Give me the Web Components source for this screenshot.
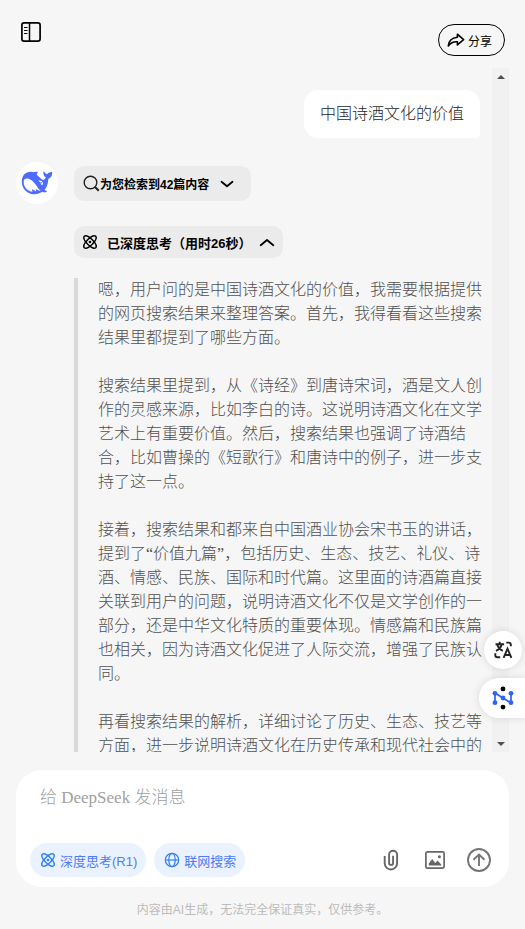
<!DOCTYPE html>
<html lang="zh-CN">
<head>
<meta charset="utf-8">
<meta name="viewport" content="width=device-width, initial-scale=1">
<title>DeepSeek</title>
<style>
  html, body {
    height: 100%;
    margin: 0;
  }

  body {
    background: #f6f6f6;
    color: #000;
    overflow: hidden;
    font-family: "Liberation Sans", "Noto Sans CJK SC", sans-serif;
    text-spacing-trim: space-all;
  }
</style>
</head>
<body>
<chat-app></chat-app>

<script>
const icons = {
  sidebar: `<svg width="22" height="22" viewBox="0 0 22 22" fill="none" stroke="#000">
    <rect x="1.9" y="1.9" width="18.200" height="18.200" rx="2.200" stroke-width="1.700"/>
    <path d="M9.500 1.500v19" stroke-width="1.500"/>
    <path d="M4 6.500h3.500M4 9.500h3.500M4 12.500h3.500" stroke-width="1.200"/>
  </svg>`,
  share: `<svg width="18" height="16" viewBox="0 0 18 16" fill="none" stroke="#000" stroke-width="1.6" stroke-linejoin="round">
    <path d="M10.400 2.200 16.600 7.600l-6.200 5.300V9.800C6.400 9.500 3.600 10.800 1.300 13.900 1.800 8.800 5.300 5.800 10.400 5.300z"/>
  </svg>`,
  search: `<svg width="17" height="17" viewBox="0 0 17 17" fill="none" stroke="#222" stroke-width="1.4">
    <circle cx="7.500" cy="7.500" r="6.300"/>
    <path d="m12 12 3.800 3.800" stroke-width="2"/>
  </svg>`,
  down: `<svg width="14" height="8" viewBox="0 0 14 8" fill="none" stroke="#000" stroke-width="1.800" stroke-linecap="round" stroke-linejoin="round"><path d="m1.500 1.800 5.500 4.400 5.500-4.400"/></svg>`,
  up: `<svg width="16" height="9" viewBox="0 0 16 9" fill="none" stroke="#000" stroke-width="1.800" stroke-linecap="round" stroke-linejoin="round"><path d="m1.700 7.200 6.300-5.200 6.300 5.200"/></svg>`,
  atom: `<svg width="16" height="16" viewBox="0 0 16 16" fill="none" stroke="currentColor" stroke-width="1.500">
    <path d="M2.300 2.300C4.300.5 8 3.500 10.300 5.700 12.500 8 15.500 11.700 13.700 13.700 11.700 15.500 8 12.500 5.700 10.300 3.500 8 .5 4.300 2.300 2.300z"/>
    <path d="M13.700 2.300C11.700.5 8 3.500 5.700 5.700 3.500 8 .5 11.700 2.300 13.700 4.300 15.500 8 12.500 10.300 10.300 12.500 8 15.500 4.300 13.700 2.300z"/>
    <circle cx="8" cy="8" r="1.300" fill="currentColor" stroke="none"/>
  </svg>`,
  globe: `<svg width="16" height="16" viewBox="0 0 16 16" fill="none" stroke="currentColor" stroke-width="1.200">
    <circle cx="8" cy="8" r="6.700"/>
    <ellipse cx="8" cy="8" rx="3.200" ry="6.700"/>
    <path d="M1.300 8h13.400"/>
  </svg>`,
  clip: `<svg width="16" height="22" viewBox="0 0 16 22" fill="none" stroke="#666" stroke-width="1.900">
    <path d="M1.700 7v7.300a6.200 6.200 0 0 0 12.400 0V5.700a4 4 0 0 0-8 0v8.200a2 2 0 0 0 4 0V6.700"/>
  </svg>`,
  image: `<svg width="20" height="18" viewBox="0 0 20 18">
    <rect x=".9" y=".9" width="18.200" height="16.200" rx="1.500" fill="none" stroke="#666" stroke-width="1.700"/>
    <path d="M3.800 14.500v-2l3.400-4.600 3 4 2.400-2.400 3.600 4v1z" fill="#666"/>
    <circle cx="14.400" cy="5.800" r="1.500" fill="#666"/>
  </svg>`,
  send: `<svg width="24" height="24" viewBox="0 0 24 24" fill="none" stroke="#757575" stroke-width="1.900">
    <circle cx="12" cy="12" r="11"/>
    <path d="M12 18V6.800M6.500 11.800 12 6.500l5.500 5.300"/>
  </svg>`,
  whale: `<svg width="32" height="26" viewBox="0 0 32 26">
    <path fill="#4d6bfe" d="M31.200 1.500c-1.300.9-2.500.5-3.500 1.300-.7.500-1.200 1.200-1.800 1.400-1.200-.3-1.800-1.500-2.700-2.500-.4-.5-.9-.3-.9.400 0 2.500.7 4.200 2.600 5.500-.7 1.200-1.500 2.100-2.600 2.500-1.700-.4-2.700-1.800-4-3-1.100-1.100-2.900-2.200-2.500-3.400.2-.6 1-.9 1.300-1.300-.9-1-3.200-.7-5.200-.1C10.600 1.300 9.500 2 8.300 2 3.500 2.400.8 6.500.8 11.600c0 7.100 5.400 12.700 12.300 12.700 3.300 0 5.900-1 8-2.500 1.500.6 3.800.8 4.500.1.600-.6.200-1.200-2.200-2 2-2.200 3.300-4.900 3.600-8.200.1-1.500.3-2.600.9-3.100 2.400-.9 3.700-3.500 3.300-7.100z"/>
    <path fill="#fff" d="M2.700 12.500c-.2-3 1-4.200 3.500-4 4.300.5 7.300 4.300 9.700 7.800 1.200 1.800 2.200 3.500 3.700 4.300-2 .2-3.700-.5-5-1.500l.5 2.500-3.700-2.300c-.8.4-.2 1.500.3 2.500-5-.5-8.700-4.500-9-9.300z"/>
    <path fill="#fff" d="M17.300 10.600c2-.5 3.800.2 4.500 2.100.5 1.300.1 2.200-.9 2.200-1.300 0-1.100-1.100-1.700-2.300-.4-.8-1.300-1-1.900-2z"/>
    <circle cx="20.100" cy="12.700" r=".8" fill="#4d6bfe"/>
  </svg>`,
  translate: `<svg width="19" height="18" viewBox="0 0 19 18" fill="none" stroke="#222" stroke-width="1.900">
    <path d="M1.500 3.300h8.600M5.700.8v2.500M2 9.800c3.300-1.500 5-3.600 5.700-6.300M3.300 4c1 2.800 2.700 4.500 5.500 5.800"/>
    <path d="m9.600 16.800 3.900-9.200 3.900 9.200M10.900 14h5.200"/>
    <path d="M12.300 1.600h2.500a2 2 0 0 1 2 2v1.700M1.300 12.300v1.900a2 2 0 0 0 2 2h2.900"/>
  </svg>`,
  network: `<svg width="24" height="24" viewBox="0 0 24 24">
    <path d="M4 17V7l16 10V7" fill="none" stroke="#2f62f5" stroke-width="1.700" stroke-linejoin="round"/>
    <g fill="#2f62f5">
      <circle cx="4" cy="7.300" r="2.400"/><circle cx="4" cy="16.700" r="2.400"/>
      <circle cx="20" cy="7.300" r="2.400"/><circle cx="20" cy="16.700" r="2.400"/>
      <circle cx="12" cy="12" r="2.400"/>
    </g>
    <g fill="#000"><circle cx="12" cy="2.900" r="2.400"/><circle cx="12" cy="21.100" r="2.400"/></g>
  </svg>`,
};

const thoughts = [
  '嗯，用户问的是中国诗酒文化的价值，我需要根据提供的网页搜索结果来整理答案。首先，我得看看这些搜索结果里都提到了哪些方面。',
  '搜索结果里提到，从《诗经》到唐诗宋词，酒是文人创作的灵感来源，比如李白的诗。这说明诗酒文化在文学艺术上有重要价值。然后，搜索结果也强调了诗酒结合，比如曹操的《短歌行》和唐诗中的例子，进一步支持了这一点。',
  '接着，搜索结果和都来自中国酒业协会宋书玉的讲话，提到了“价值九篇”，包括历史、生态、技艺、礼仪、诗酒、情感、民族、国际和时代篇。这里面的诗酒篇直接关联到用户的问题，说明诗酒文化不仅是文学创作的一部分，还是中华文化特质的重要体现。情感篇和民族篇也相关，因为诗酒文化促进了人际交流，增强了民族认同。',
  '再看搜索结果的解析，详细讨论了历史、生态、技艺等方面，进一步说明诗酒文化在历史传承和现代社会中的',
];

const baseStyle = `
  * {
    box-sizing: border-box;
  }

  button {
    appearance: none;
    margin: 0;
    padding: 0;
    border: 0;
    background: none;
    color: inherit;
    font: inherit;
    cursor: pointer;
  }

  svg {
    display: block;
    flex: none;
    overflow: visible;
  }
`;

class BaseElement extends HTMLElement {
  constructor() {
    super();
    this.attachShadow({ mode: 'open' });
    this.shadowRoot.innerHTML = `<style>${baseStyle}${this.styles()}</style>${this.markup()}`;
  }

  styles() {
    return '';
  }

  markup() {
    return '<slot></slot>';
  }
}

class ChatHeader extends BaseElement {
  styles() {
    return `
      :host {
        display: flex;
        flex: none;
        justify-content: space-between;
        align-items: flex-start;
        height: 68px;
        padding: 21px 20px 0;
      }

      .share {
        display: flex;
        align-items: center;
        gap: 3px;
        height: 32px;
        margin-top: 3px;
        padding: 0 12px 0 8px;
        border: 1px solid #000;
        border-radius: 16px;
        font-size: 12px;
      }
    `;
  }

  markup() {
    return `
      <button type="button" aria-label="侧边栏">${icons.sidebar}</button>
      <button type="button" class="share">${icons.share}<span>分享</span></button>
    `;
  }
}

class UserMessage extends BaseElement {
  styles() {
    return `
      :host {
        display: block;
        align-self: flex-end;
        margin-right: 12px;
        padding: 12px 16px;
        border-radius: 14px 14px 4px 14px;
        background: #fff;
        color: #1f1f1f;
        font-size: 16px;
        font-weight: 300;
        line-height: 24px;
      }
    `;
  }
}

// Grey toggle used above search results and above the reasoning text
class FoldButton extends BaseElement {
  styles() {
    return `
      :host {
        display: block;
      }

      button {
        display: flex;
        align-items: center;
        height: 35px;
        padding: 0 17px 0 9px;
        border-radius: 10px;
        background: #ebebeb;
        font-size: 12px;
        font-weight: 700;
      }

      .chevron {
        margin-left: 11px;
      }

      :host([kind="think"]) button {
        height: 32px;
        padding: 0 8px;
        font-size: 13px;
      }

      :host([kind="think"]) .label {
        margin-left: 9px;
      }

      :host([kind="think"]) .chevron {
        margin-left: 8px;
      }
    `;
  }

  markup() {
    const think = this.getAttribute('kind') === 'think';
    return `
      <button type="button" aria-expanded="${think}">
        ${think ? icons.atom : icons.search}
        <span class="label"><slot></slot></span>
        <span class="chevron">${think ? icons.up : icons.down}</span>
      </button>
    `;
  }
}

class ThinkText extends BaseElement {
  styles() {
    return `
      :host {
        display: block;
        padding-left: 20px;
        border-left: 4px solid #d9d9d9;
        color: #505050;
        font-family: "Liberation Serif", "Noto Sans CJK SC", serif;
        font-size: 16px;
        font-weight: 300;
        line-height: 24px;
      }

      p {
        margin: 0 0 24px;
      }
    `;
  }

  markup() {
    return thoughts.map((text) => `<p>${text}</p>`).join('');
  }
}

class BotMessage extends BaseElement {
  styles() {
    return `
      :host {
        display: flex;
        gap: 16px;
        margin-right: 9px;
      }

      .avatar {
        display: flex;
        flex: none;
        align-items: center;
        justify-content: center;
        width: 42px;
        height: 42px;
        border-radius: 50%;
        background: #fff;
      }

      .body {
        display: flex;
        flex: 1;
        flex-direction: column;
        align-items: flex-start;
        min-width: 0;
        padding-top: 4px;
      }

      .body ::slotted(:not(:first-child)) {
        margin-top: 20px;
      }

      .body ::slotted(:nth-child(2)) {
        margin-top: 25px;
      }
    `;
  }

  markup() {
    return `
      <div class="avatar">${icons.whale}</div>
      <div class="body"><slot></slot></div>
    `;
  }
}

class ChatThread extends BaseElement {
  styles() {
    return `
      :host {
        display: flex;
        flex: 1;
        min-height: 0;
        margin: 0 16px;
      }

      .content {
        display: flex;
        flex: 1;
        flex-direction: column;
        gap: 24px;
        min-width: 0;
        padding-top: 22px;
        overflow: hidden;
      }

      .track {
        display: flex;
        flex: none;
        flex-direction: column;
        justify-content: space-between;
        width: 17px;
        background: #f1f1f1;
      }

      .track button {
        display: flex;
        align-items: center;
        justify-content: center;
        height: 17px;
      }
    `;
  }

  markup() {
    return `
      <div class="content"><slot></slot></div>
      <div class="track">
        <button type="button" aria-label="向上滚动"><svg width="8" height="4" viewBox="0 0 8 4"><path d="M4 0 8 4H0z" fill="#505050"/></svg></button>
        <button type="button" aria-label="向下滚动"><svg width="8" height="4" viewBox="0 0 8 4"><path d="M0 0h8L4 4z" fill="#505050"/></svg></button>
      </div>
    `;
  }
}

class ChatComposer extends BaseElement {
  styles() {
    return `
      :host {
        display: block;
        flex: none;
        margin: 18px 16px 0;
        padding: 16px 14px 10px;
        border-radius: 26px;
        background: #fff;
      }

      textarea {
        display: block;
        width: 100%;
        height: 48px;
        margin: 0 0 9px;
        padding: 0 10px;
        border: 0;
        outline: 0;
        resize: none;
        background: none;
        color: #262626;
        font-family: "Liberation Serif", "Noto Sans CJK SC", serif;
        font-size: 17px;
        font-weight: 300;
        line-height: 24px;
      }

      textarea::placeholder {
        color: #a0a0a0;
        opacity: 1;
      }

      .row,
      .tools {
        display: flex;
        align-items: center;
      }

      .row {
        gap: 8px;
      }

      .tools {
        gap: 24px;
        margin-left: auto;
        padding-right: 4px;
      }

      .tools button:first-child {
        margin-right: 2px;
      }

      .tools button:last-child {
        margin-left: -2px;
      }

      .mode {
        display: flex;
        align-items: center;
        gap: 4px;
        height: 34px;
        padding: 0 9px 0 10px;
        border-radius: 17px;
        background: #ebf2ff;
        color: #4d7cf6;
        font-size: 13px;
      }

      .mode svg {
        color: #3181ee;
      }
    `;
  }

  markup() {
    return `
      <textarea aria-label="消息" placeholder="给 DeepSeek 发消息"></textarea>
      <div class="row">
        <button type="button" class="mode">${icons.atom}<span>深度思考(R1)</span></button>
        <button type="button" class="mode">${icons.globe}<span>联网搜索</span></button>
        <div class="tools">
          <button type="button" aria-label="附件">${icons.clip}</button>
          <button type="button" aria-label="图片">${icons.image}</button>
          <button type="button" aria-label="发送">${icons.send}</button>
        </div>
      </div>
    `;
  }
}

class FloatTools extends BaseElement {
  styles() {
    return `
      :host {
        position: fixed;
        right: 0;
        bottom: 211px;
        display: flex;
        flex-direction: column;
        align-items: flex-end;
        gap: 9px;
      }

      button {
        display: flex;
        align-items: center;
        justify-content: center;
        background: #fff;
        box-shadow: 0 0 8px rgba(0, 0, 0, 0.12);
      }

      .translate {
        width: 38px;
        height: 38px;
        margin-right: 3px;
        border-radius: 50%;
      }

      .network {
        width: 46px;
        height: 40px;
        padding-left: 2px;
        border-radius: 20px 0 0 20px;
      }
    `;
  }

  markup() {
    return `
      <button type="button" class="translate" aria-label="翻译">${icons.translate}</button>
      <button type="button" class="network" aria-label="助手">${icons.network}</button>
    `;
  }
}

class ChatApp extends BaseElement {
  styles() {
    return `
      :host {
        display: flex;
        flex-direction: column;
        height: 100vh;
      }

      footer {
        flex: none;
        padding: 14px 0 10px;
        color: #bcbcbc;
        font-size: 12px;
        line-height: 18px;
        text-align: center;
      }
    `;
  }

  markup() {
    return `
      <chat-header></chat-header>
      <chat-thread>
        <user-message>中国诗酒文化的价值</user-message>
        <bot-message>
          <fold-button kind="search">为您检索到42篇内容</fold-button>
          <fold-button kind="think">已深度思考（用时26秒）</fold-button>
          <think-text></think-text>
        </bot-message>
      </chat-thread>
      <chat-composer></chat-composer>
      <footer>内容由AI生成，无法完全保证真实，仅供参考。</footer>
      <float-tools></float-tools>
    `;
  }
}

customElements.define('chat-header', ChatHeader);
customElements.define('user-message', UserMessage);
customElements.define('fold-button', FoldButton);
customElements.define('think-text', ThinkText);
customElements.define('bot-message', BotMessage);
customElements.define('chat-thread', ChatThread);
customElements.define('chat-composer', ChatComposer);
customElements.define('float-tools', FloatTools);
customElements.define('chat-app', ChatApp);
</script>
</body>
</html>
